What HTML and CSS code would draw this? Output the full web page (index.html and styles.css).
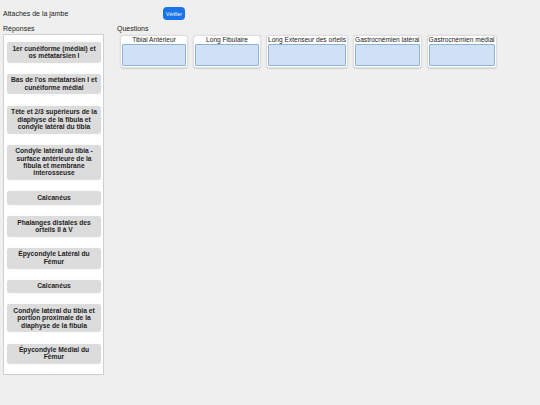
FILE: index.html
```html
<!DOCTYPE html>
<html lang="fr">
<head>
<meta charset="utf-8">
<title>Attaches de la jambe</title>
<link rel="stylesheet" href="styles.css">
</head>
<body>
<div class="page">
  <div class="header">
    <div class="title">Attaches de la jambe</div>
    <button class="verify">Vérifier</button>
  </div>
  <div class="main">
    <div class="answers-col">
      <div class="label">Réponses</div>
      <div class="answers">
        <div class="item">1er cunéiforme (médial) et os métatarsien I</div>
        <div class="item">Bas de l'os métatarsien I et cunéiforme médial</div>
        <div class="item">Tête et 2/3 supérieurs de la diaphyse de la fibula et condyle latéral du tibia</div>
        <div class="item">Condyle latéral du tibia - surface antérieure de la fibula et membrane interosseuse</div>
        <div class="item">Calcanéus</div>
        <div class="item">Phalanges distales des orteils II à V</div>
        <div class="item">Épycondyle Latéral du Fémur</div>
        <div class="item">Calcanéus</div>
        <div class="item">Condyle latéral du tibia et portion proximale de la diaphyse de la fibula</div>
        <div class="item">Épycondyle Médial du Fémur</div>
      </div>
    </div>
    <div class="questions-col">
      <div class="label">Questions</div>
      <div class="cards">
        <div class="card"><div class="card-title">Tibial Antérieur</div><div class="drop"></div></div>
        <div class="card"><div class="card-title">Long Fibulaire</div><div class="drop"></div></div>
        <div class="card"><div class="card-title">Long Extenseur des orteils</div><div class="drop"></div></div>
        <div class="card"><div class="card-title">Gastrocnémien latéral</div><div class="drop"></div></div>
        <div class="card"><div class="card-title">Gastrocnémien médial</div><div class="drop"></div></div>
      </div>
    </div>
  </div>
</div>
</body>
</html>
```
FILE: styles.css
```css
html, body {
  margin: 0;
  padding: 0;
  background: #efefef;
  font-family: "Liberation Sans", Arial, sans-serif;
  color: #222;
}
.page {
  padding: 7px 0 0 3px;
}
.header {
  display: flex;
  align-items: center;
  height: 13px;
}
.title {
  font-size: 7px;
  width: 160px;
}
.verify {
  margin: 0;
  height: 13px;
  width: 22px;
  padding: 0;
  border: none;
  border-radius: 4px;
  background: #1a73e8;
  color: #fff;
  font-family: "Liberation Sans", Arial, sans-serif;
  font-size: 5px;
}
.main {
  display: flex;
  align-items: flex-start;
  gap: 13px;
  margin-top: 4px;
}
.label {
  font-size: 7px;
  line-height: 9px;
  height: 9px;
}
.answers-col {
  width: 101px;
}
.answers {
  margin-top: 1px;
  background: #fff;
  border: 1px solid #cfcfcf;
  box-sizing: border-box;
  width: 101px;
  height: 341px;
  padding: 7px 2px 0 3px;
  display: flex;
  flex-direction: column;
  gap: 12.3px;
}
.item {
  background: #dcdcdc;
  border-radius: 3px;
  box-shadow: 0 0.5px 1px rgba(0,0,0,0.15);
  font-size: 6.7px;
  font-weight: bold;
  line-height: 7.3px;
  padding: 2.5px 2px;
  text-align: center;
  color: #1e1e1e;
}
.cards {
  display: flex;
  gap: 5px;
  padding-left: 3px;
  margin-top: 2px;
}
.card {
  background: #fff;
  border: 1px solid #dedede;
  border-radius: 3px;
  box-shadow: 0 0.5px 1.5px rgba(0,0,0,0.12);
  min-width: 64px;
  padding: 0 1px 1px;
  display: flex;
  flex-direction: column;
  align-items: stretch;
}
.card-title {
  font-size: 6.6px;
  line-height: 8px;
  text-align: center;
  white-space: nowrap;
  height: 8px;
}
.drop {
  height: 22px;
  background: #cfe1f5;
  border: 1px solid #8fb0d8;
  box-sizing: border-box;
  border-radius: 1px;
}
```
